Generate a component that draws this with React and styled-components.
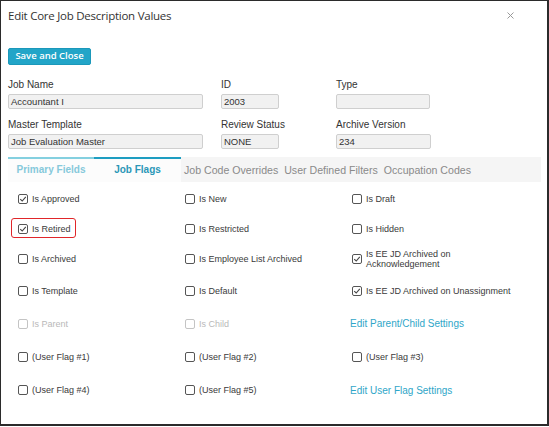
import React from "react";
import styled, { createGlobalStyle } from "styled-components";

const Global = createGlobalStyle`
  html, body { margin: 0; padding: 0; background: #fff; }
  body { font-family: "Liberation Sans", Arial, sans-serif; }
  * { box-sizing: border-box; }
`;

const Frame = styled.div`
  width: 549px;
  height: 426px;
  border-style: solid;
  border-color: #2b2b2b;
  border-width: 1px 2px 2px 1px;
  background: #fff;
  padding: 0 7px;
  display: flex;
  flex-direction: column;
  position: relative;
  color: #3a3a3a;
`;

const TitleBar = styled.div`
  height: 30px;
  display: flex;
  align-items: center;
  justify-content: space-between;
  padding-bottom: 1px;
`;

const Title = styled.div`
  font-family: "Open Sans", "Noto Sans", sans-serif;
  font-size: 11.5px;
  color: #333;
  letter-spacing: -0.25px;
`;

const Close = styled.button`
  border: none;
  background: none;
  padding: 0;
  margin-right: 25px;
  width: 10px;
  height: 10px;
  display: flex;
  align-items: center;
  justify-content: center;
  cursor: pointer;
`;

const Toolbar = styled.div`
  padding-top: 14px;
  height: 48px;
`;

const PrimaryButton = styled.button`
  font-family: "Open Sans", "Noto Sans", sans-serif;
  font-size: 9.5px;
  font-weight: 600;
  color: #fff;
  background: #22a5c8;
  border: 1px solid #1b98ba;
  border-radius: 2px;
  width: 83px;
  height: 17px;
  padding: 0;
  line-height: 14px;
`;

const FieldGrid = styled.div`
  display: grid;
  grid-template-columns: 213px 115px 110px;
  row-gap: 10px;
`;

const Field = styled.div`
  display: flex;
  flex-direction: column;
`;

const Label = styled.div`
  font-size: 10px;
  color: #333;
  height: 15px;
  line-height: 12px;
`;

const Input = styled.div`
  width: ${(p) => p.w}px;
  height: 15px;
  background: #f1f1f1;
  border: 1px solid #cfcfcf;
  border-radius: 2px;
  font-size: 9.5px;
  line-height: 13px;
  padding-left: 2px;
  color: #333;
`;

const TabBar = styled.div`
  margin-top: 8px;
  height: 25px;
  display: flex;
  background: #f5f5f5;
  width: 533px;
`;

const Tab = styled.div`
  height: 25px;
  display: flex;
  align-items: center;
  justify-content: center;
  font-size: ${(p) => (p.w ? "10px" : "10.6px")};
  width: ${(p) => (p.w ? `${p.w}px` : "auto")};
  padding: ${(p) => (p.w ? "0" : "0 3px")};
  background: ${(p) => (p.line ? "#fcfcfc" : "transparent")};
  border-top: 2px solid ${(p) => p.line || "transparent"};
  color: ${(p) => p.color};
  font-weight: ${(p) => (p.bold ? "bold" : "normal")};
  padding-bottom: 2px;
`;

const FlagGrid = styled.div`
  margin-top: 1px;
  display: grid;
  grid-template-columns: 167px 167px 180px;
  grid-template-rows: 31px 30px 30px 33px 33px 33px 34px;
  padding-left: 10px;
  align-items: center;
`;

const Flag = styled.label`
  display: flex;
  align-items: center;
  gap: 4px;
  font-size: 9px;
  line-height: 10px;
  color: ${(p) => (p.disabled ? "#b9b9b9" : "#3a3a3a")};
  position: relative;
  justify-self: start;
`;

const Box = styled.span`
  width: 10px;
  height: 10px;
  flex: none;
  border: 1px solid ${(p) => (p.disabled ? "#c4c4c4" : "#555")};
  border-radius: 2px;
  background: #fff;
  display: flex;
  align-items: center;
  justify-content: center;
`;

const Highlight = styled.span`
  position: absolute;
  left: -7px;
  top: -6px;
  width: 65px;
  height: 20px;
  border: 1.5px solid #e0262a;
  border-radius: 3px;
  pointer-events: none;
`;

const LinkText = styled.a`
  font-size: 10px;
  color: #2fa6c8;
  text-decoration: none;
  justify-self: start;
  margin-left: -2px;
`;

function Check({ on, disabled }) {
  return (
    <Box disabled={disabled}>
      {on && (
        <svg width="8" height="8" viewBox="0 0 8 8">
          <path d="M1.2 4.2 L3.2 6 L6.8 1.8" fill="none" stroke="#444" strokeWidth="1.1" />
        </svg>
      )}
    </Box>
  );
}

function FlagItem({ on, disabled, children, highlight }) {
  return (
    <Flag disabled={disabled}>
      {highlight && <Highlight />}
      <Check on={on} disabled={disabled} />
      <span>{children}</span>
    </Flag>
  );
}

export default function App() {
  return (
    <>
      <Global />
      <Frame>
        <TitleBar>
          <Title>Edit Core Job Description Values</Title>
          <Close aria-label="close">
            <svg width="9" height="9" viewBox="0 0 9 9">
              <path d="M1.5 1.5 L7.5 7.5 M7.5 1.5 L1.5 7.5" stroke="#999" strokeWidth="1" />
            </svg>
          </Close>
        </TitleBar>
        <Toolbar>
          <PrimaryButton>Save and Close</PrimaryButton>
        </Toolbar>
        <FieldGrid>
          <Field>
            <Label>Job Name</Label>
            <Input w={195}>Accountant I</Input>
          </Field>
          <Field>
            <Label>ID</Label>
            <Input w={58}>2003</Input>
          </Field>
          <Field>
            <Label>Type</Label>
            <Input w={94}></Input>
          </Field>
          <Field>
            <Label>Master Template</Label>
            <Input w={195}>Job Evaluation Master</Input>
          </Field>
          <Field>
            <Label>Review Status</Label>
            <Input w={58}>NONE</Input>
          </Field>
          <Field>
            <Label>Archive Version</Label>
            <Input w={95}>234</Input>
          </Field>
        </FieldGrid>
        <TabBar>
          <Tab w={86} line="#84d0e0" color="#86c9db" bold>Primary Fields</Tab>
          <Tab w={87} line="#1e9ec2" color="#2a97b7" bold>Job Flags</Tab>
          <Tab color="#8a8a8a">Job Code Overrides</Tab>
          <Tab color="#8a8a8a">User Defined Filters</Tab>
          <Tab color="#8a8a8a">Occupation Codes</Tab>
        </TabBar>
        <FlagGrid>
          <FlagItem on>Is Approved</FlagItem>
          <FlagItem>Is New</FlagItem>
          <FlagItem>Is Draft</FlagItem>

          <FlagItem on highlight>Is Retired</FlagItem>
          <FlagItem>Is Restricted</FlagItem>
          <FlagItem>Is Hidden</FlagItem>

          <FlagItem>Is Archived</FlagItem>
          <FlagItem>Is Employee List Archived</FlagItem>
          <FlagItem on>Is EE JD Archived on<br />Acknowledgement</FlagItem>

          <FlagItem>Is Template</FlagItem>
          <FlagItem>Is Default</FlagItem>
          <FlagItem on>Is EE JD Archived on Unassignment</FlagItem>

          <FlagItem disabled>Is Parent</FlagItem>
          <FlagItem disabled>Is Child</FlagItem>
          <LinkText href="#">Edit Parent/Child Settings</LinkText>

          <FlagItem>(User Flag #1)</FlagItem>
          <FlagItem>(User Flag #2)</FlagItem>
          <FlagItem>(User Flag #3)</FlagItem>

          <FlagItem>(User Flag #4)</FlagItem>
          <FlagItem>(User Flag #5)</FlagItem>
          <LinkText href="#">Edit User Flag Settings</LinkText>
        </FlagGrid>
      </Frame>
    </>
  );
}
